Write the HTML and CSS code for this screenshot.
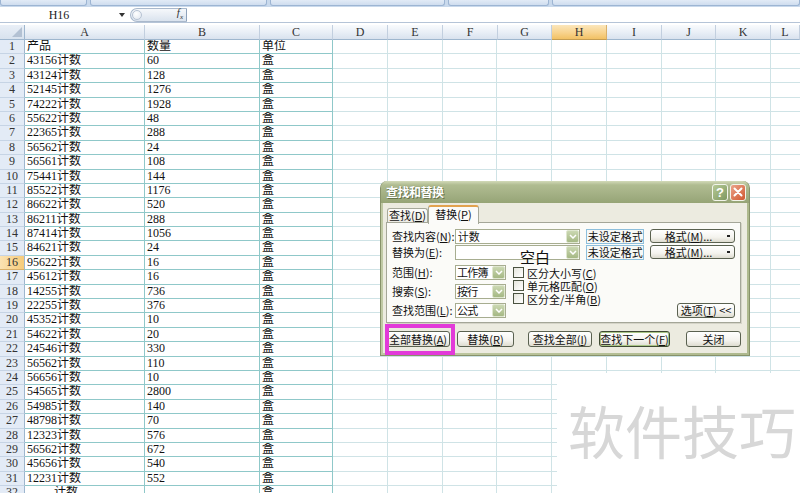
FILE: index.html
```html
<!DOCTYPE html>
<html lang="zh">
<head>
<meta charset="utf-8">
<title>查找和替换</title>
<link rel="stylesheet" href="styles.css">
</head>
<body>
<div class="app">
  <div class="ribbon">
    <div class="seg s1"></div><div class="seg s2"></div><div class="seg s3"></div><div class="seg s4"></div><div class="seg s5"></div>
  </div>
  <div class="fbar">
    <div class="namebox">H16</div>
    <div class="nb-arrow"></div>
    <div class="fx"><span class="knob"></span><span class="fxt"><i>f</i><sub>x</sub></span></div>
    <div class="formula"></div>
  </div>
  <div class="sheet">
    <div class="corner"></div>
    <div class="ch">A</div><div class="ch">B</div><div class="ch">C</div>
    <div class="chs">
      <div class="ch w55">D</div><div class="ch w55">E</div><div class="ch w55">F</div><div class="ch w54">G</div><div class="ch w55 sel">H</div><div class="ch w55">I</div><div class="ch w54">J</div><div class="ch w55">K</div><div class="ch wl">L</div>
    </div>

    <div class="rh">1</div><div class="c">产品</div><div class="c">数量</div><div class="c">单位</div><div class="x"></div>
    <div class="rh">2</div><div class="c">43156计数</div><div class="c">60</div><div class="c">盒</div><div class="x"></div>
    <div class="rh">3</div><div class="c">43124计数</div><div class="c">128</div><div class="c">盒</div><div class="x"></div>
    <div class="rh">4</div><div class="c">52145计数</div><div class="c">1276</div><div class="c">盒</div><div class="x"></div>
    <div class="rh">5</div><div class="c">74222计数</div><div class="c">1928</div><div class="c">盒</div><div class="x"></div>
    <div class="rh">6</div><div class="c">55622计数</div><div class="c">48</div><div class="c">盒</div><div class="x"></div>
    <div class="rh">7</div><div class="c">22365计数</div><div class="c">288</div><div class="c">盒</div><div class="x"></div>
    <div class="rh">8</div><div class="c">56562计数</div><div class="c">24</div><div class="c">盒</div><div class="x"></div>
    <div class="rh">9</div><div class="c">56561计数</div><div class="c">108</div><div class="c">盒</div><div class="x"></div>
    <div class="rh">10</div><div class="c">75441计数</div><div class="c">144</div><div class="c">盒</div><div class="x"></div>
    <div class="rh">11</div><div class="c">85522计数</div><div class="c">1176</div><div class="c">盒</div><div class="x"></div>
    <div class="rh">12</div><div class="c">86622计数</div><div class="c">520</div><div class="c">盒</div><div class="x"></div>
    <div class="rh">13</div><div class="c">86211计数</div><div class="c">288</div><div class="c">盒</div><div class="x"></div>
    <div class="rh">14</div><div class="c">87414计数</div><div class="c">1056</div><div class="c">盒</div><div class="x"></div>
    <div class="rh">15</div><div class="c">84621计数</div><div class="c">24</div><div class="c">盒</div><div class="x"></div>
    <div class="rh sel">16</div><div class="c">95622计数</div><div class="c">16</div><div class="c">盒</div><div class="x"></div>
    <div class="rh">17</div><div class="c">45612计数</div><div class="c">16</div><div class="c">盒</div><div class="x"></div>
    <div class="rh">18</div><div class="c">14255计数</div><div class="c">736</div><div class="c">盒</div><div class="x"></div>
    <div class="rh">19</div><div class="c">22255计数</div><div class="c">376</div><div class="c">盒</div><div class="x"></div>
    <div class="rh">20</div><div class="c">45352计数</div><div class="c">10</div><div class="c">盒</div><div class="x"></div>
    <div class="rh">21</div><div class="c">54622计数</div><div class="c">20</div><div class="c">盒</div><div class="x"></div>
    <div class="rh">22</div><div class="c">24546计数</div><div class="c">330</div><div class="c">盒</div><div class="x"></div>
    <div class="rh">23</div><div class="c">56562计数</div><div class="c">110</div><div class="c">盒</div><div class="x"></div>
    <div class="rh">24</div><div class="c">56656计数</div><div class="c">10</div><div class="c">盒</div><div class="x"></div>
    <div class="rh">25</div><div class="c">54565计数</div><div class="c">2800</div><div class="c">盒</div><div class="x"></div>
    <div class="rh">26</div><div class="c">54985计数</div><div class="c">140</div><div class="c">盒</div><div class="x"></div>
    <div class="rh">27</div><div class="c">48798计数</div><div class="c">70</div><div class="c">盒</div><div class="x"></div>
    <div class="rh">28</div><div class="c">12323计数</div><div class="c">576</div><div class="c">盒</div><div class="x"></div>
    <div class="rh">29</div><div class="c">56562计数</div><div class="c">672</div><div class="c">盒</div><div class="x"></div>
    <div class="rh">30</div><div class="c">45656计数</div><div class="c">540</div><div class="c">盒</div><div class="x"></div>
    <div class="rh">31</div><div class="c">12231计数</div><div class="c">552</div><div class="c">盒</div><div class="x"></div>
    <div class="rh">32</div><div class="c">　　 计数</div><div class="c"></div><div class="c">盒</div><div class="x"></div>
  </div>

  <div class="dialog">
    <div class="titlebar">
      <span class="title">查找和替换</span>
      <span class="tbtn help">?</span>
      <span class="tbtn close"><svg width="10" height="10" viewBox="0 0 10 10"><path d="M1.5 1.5 L8.5 8.5 M8.5 1.5 L1.5 8.5" stroke="#fff" stroke-width="2" stroke-linecap="round"/></svg></span>
    </div>
    <div class="dbody">
      <div class="tabs">
        <div class="tab">查找(<u>D</u>)</div>
        <div class="tab active">替换(<u>P</u>)</div>
      </div>
      <div class="panel">
        <div class="frow">
          <span class="lbl">查找内容(<u>N</u>):</span>
          <div class="combo wide"><span class="val">计数</span><span class="dd"><svg width="8" height="5" viewBox="0 0 8 5"><path d="M1 1 L4 4 L7 1" fill="none" stroke="#fff" stroke-width="1.5"/></svg></span></div>
          <div class="fmtbox">未设定格式</div>
          <div class="btn fmtbtn">格式(<u>M</u>)...<span class="dot"></span></div>
        </div>
        <div class="frow">
          <span class="lbl">替换为(<u>E</u>):</span>
          <div class="combo wide"><span class="val"></span><span class="dd"><svg width="8" height="5" viewBox="0 0 8 5"><path d="M1 1 L4 4 L7 1" fill="none" stroke="#fff" stroke-width="1.5"/></svg></span></div>
          <div class="fmtbox">未设定格式</div>
          <div class="btn fmtbtn">格式(<u>M</u>)...<span class="dot"></span></div>
        </div>
        <div class="lower">
          <div class="lcol">
            <div class="srow"><span class="lbl">范围(<u>H</u>):</span><div class="combo narrow"><span class="val">工作簿</span><span class="dd"><svg width="8" height="5" viewBox="0 0 8 5"><path d="M1 1 L4 4 L7 1" fill="none" stroke="#fff" stroke-width="1.5"/></svg></span></div></div>
            <div class="srow"><span class="lbl">搜索(<u>S</u>):</span><div class="combo narrow"><span class="val">按行</span><span class="dd"><svg width="8" height="5" viewBox="0 0 8 5"><path d="M1 1 L4 4 L7 1" fill="none" stroke="#fff" stroke-width="1.5"/></svg></span></div></div>
            <div class="srow"><span class="lbl">查找范围(<u>L</u>):</span><div class="combo narrow"><span class="val">公式</span><span class="dd"><svg width="8" height="5" viewBox="0 0 8 5"><path d="M1 1 L4 4 L7 1" fill="none" stroke="#fff" stroke-width="1.5"/></svg></span></div></div>
          </div>
          <div class="checks">
            <div class="chk"><span class="box"></span><span class="ct">区分大小写(<u>C</u>)</span></div>
            <div class="chk"><span class="box"></span><span class="ct">单元格匹配(<u>O</u>)</span></div>
            <div class="chk"><span class="box"></span><span class="ct">区分全/半角(<u>B</u>)</span></div>
          </div>
          <div class="btn opt">选项(<u>T</u>) &lt;&lt;</div>
        </div>
      </div>
      <div class="actions">
        <div class="btn a1">全部替换(<u>A</u>)</div>
        <div class="btn a2">替换(<u>R</u>)</div>
        <div class="btn a3">查找全部(<u>I</u>)</div>
        <div class="btn a4 def">查找下一个(<u>F</u>)</div>
        <div class="btn a5">关闭</div>
      </div>
    </div>
    <div class="hl"></div>
  </div>

  <div class="note">空白</div>
  <div class="wm">软件技巧</div>
</div>
</body>
</html>
```

FILE: styles.css
```css
* { box-sizing: border-box; }
html, body { margin: 0; padding: 0; }
body { width: 800px; height: 493px; overflow: hidden; background: #fff; }

.app {
  position: relative;
  width: 800px;
  height: 493px;
  overflow: hidden;
  font-family: "Liberation Serif", "Noto Sans CJK SC", serif;
  font-size: 12px;
  color: #111;
  background: #fff;
}

/* ribbon remnants */
.ribbon { display: flex; gap: 3px; height: 7px; background: #c9d9ec; }
.seg {
  height: 6px;
  background: linear-gradient(#e2ebf6, #cfddef);
  border: 1px solid #9db5d3;
  border-top: none;
  border-radius: 0 0 3px 3px;
}
.s1 { width: 87px; }
.s2 { width: 177px; }
.s3 { width: 175px; }
.s4 { width: 101px; }
.s5 { flex: 1; }

/* formula bar */
.fbar {
  display: flex;
  align-items: center;
  height: 16px;
  background: #fff;
  border-bottom: 1px solid #b5c4d7;
}
.namebox { width: 118px; text-align: center; line-height: 14px; color: #222; }
.nb-arrow {
  width: 0; height: 0;
  border-left: 3px solid transparent;
  border-right: 3px solid transparent;
  border-top: 4px solid #333;
  margin-left: 1px;
}
.fx {
  display: flex;
  align-items: center;
  margin-left: 5px;
  width: 57px;
  height: 14px;
  border: 1px solid #aab9cc;
  border-right-color: #8ea2bb;
  border-radius: 7px 0 0 7px;
  background: linear-gradient(#f6f8fb, #dae3ee);
}
.knob {
  width: 10px; height: 10px;
  margin-left: 1px;
  border-radius: 50%;
  border: 1px solid #b7c3d3;
  background: radial-gradient(circle at 40% 35%, #fff, #dfe6ef);
}
.fxt { margin-left: auto; margin-right: 3px; font-size: 11px; line-height: 12px; color: #333; }
.fxt sub { font-size: 7px; font-style: italic; }
.formula { flex: 1; }

/* sheet */
.sheet {
  display: grid;
  grid-template-columns: 25px 120px 115px 73px 1fr;
  grid-template-rows: 15px;
  grid-auto-rows: 14.4px;
  margin-top: 2px;
  background: repeating-linear-gradient(90deg, transparent 0 53.75px, #cfe3e6 53.75px 54.75px) 333px 0 / 467px 100% no-repeat;
}
.corner {
  position: relative;
  background: linear-gradient(#e9eff7, #d8e2ee);
  border-right: 1px solid #9eb6ce;
  border-bottom: 1px solid #9eb6ce;
}
.corner::after {
  content: "";
  position: absolute;
  right: 2px; bottom: 2px;
  width: 0; height: 0;
  border-left: 10px solid transparent;
  border-bottom: 10px solid #b3c1d3;
}
.ch {
  background: linear-gradient(#f9fbfd, #e8eef6 55%, #d9e2ee);
  border-right: 1px solid #c2cfdf;
  border-bottom: 1px solid #9eb6ce;
  text-align: center;
  line-height: 14px;
  color: #333;
}
.chs { display: flex; }
.w55 { width: 55px; }
.w54 { width: 54px; }
.wl { flex: 1; }
.ch.sel {
  background: linear-gradient(#fbe6bb, #f8d38e 55%, #f2c164);
  border-bottom-color: #c59d52;
  border-right-color: #d9b06a;
}
.rh {
  background: #e3ebf6;
  border-right: 1px solid #9eb6ce;
  border-bottom: 1px solid #c6d4e5;
  text-align: center;
  line-height: 13px;
  color: #333;
}
.rh.sel { background: linear-gradient(90deg, #fbe3b3, #f6cb7a); border-bottom-color: #d9b06a; }
.c {
  border-right: 1px solid #8fc8c9;
  border-bottom: 1px solid #8fc8c9;
  padding-left: 2px;
  line-height: 13px;
  white-space: nowrap;
  overflow: hidden;
}
.x { border-bottom: 1px solid #cfe3e6; }

/* dialog */
.dialog {
  position: absolute;
  left: 380px;
  top: 181px;
  width: 370px;
  height: 175px;
  padding: 0 2px 2px;
  border: 1px solid #87926a;
  border-top: none;
  border-radius: 7px 7px 0 0;
  background: linear-gradient(90deg, #c0c9a4, #b6c097 50%, #aeb98e);
  font-family: "Noto Sans CJK SC", sans-serif;
  font-size: 11px;
  color: #111;
}
.titlebar {
  display: flex;
  align-items: center;
  height: 22px;
  margin: 0 -2px;
  padding: 0 3px 0 5px;
  border-radius: 7px 7px 0 0;
  background: linear-gradient(#d2dab8, #b0bc91 18%, #a3b084 60%, #96a476);
}
.title {
  color: #fff;
  font-size: 12px;
  font-weight: bold;
  letter-spacing: -0.5px;
  line-height: 14px;
  text-shadow: 1px 1px 0 #67734a, 0 0 1px #6f7b53;
}
.tbtn {
  display: flex;
  align-items: center;
  justify-content: center;
  width: 16px;
  height: 17px;
  border: 1px solid #f2f4ea;
  border-radius: 3px;
  color: #fff;
  font-family: "Liberation Sans", sans-serif;
  font-weight: bold;
  font-size: 13px;
}
.help { margin-left: auto; background: linear-gradient(135deg, #b6c996, #7f9860); }
.close { margin-left: 2px; background: linear-gradient(135deg, #eba38a, #d1582f); }

.dbody { height: 150px; padding: 2px 6px 0 3px; background: #ecebe0; }
.tabs { display: flex; align-items: flex-end; height: 17px; padding-left: 1px; }
.tab {
  width: 41px;
  height: 14px;
  border: 1px solid #a6a99a;
  border-bottom: none;
  border-radius: 3px 3px 0 0;
  background: linear-gradient(#fdfdfb, #ecebe4);
  text-align: center;
  line-height: 13px;
  white-space: nowrap;
}
.tab.active {
  position: relative;
  z-index: 1;
  width: 51px;
  height: 19px;
  margin-bottom: -2px;
  border-top: 2px solid #e2a24e;
  background: #fbfbf9;
  line-height: 15px;
}
.panel {
  height: 101px;
  padding: 6px 5px 4px 5px;
  border: 1px solid #a4a698;
  background: #fbfbf8;
  box-shadow: 1px 1px 0 #d5d4c8;
}
.frow { display: flex; align-items: center; height: 14px; margin-bottom: 2px; }
.lbl { width: 63px; white-space: nowrap; line-height: 13px; }
.combo {
  display: flex;
  align-items: center;
  height: 15px;
  border: 1px solid #a7ad90;
  background: #fff;
}
.wide { width: 126px; }
.narrow { width: 51px; }
.val { flex: 1; padding-left: 2px; line-height: 13px; white-space: nowrap; overflow: hidden; }
.narrow .val { padding-left: 1px; letter-spacing: -0.7px; }
.dd {
  display: flex;
  align-items: center;
  justify-content: center;
  flex: none;
  width: 13px;
  height: 13px;
  border-radius: 2px;
  background: linear-gradient(#cbd8b2, #a5b884);
  border: 1px solid #dfe7cf;
}
.fmtbox {
  width: 58px;
  height: 15px;
  margin-left: 6px;
  border: 1px solid #8dbfdc;
  background: #f6f8f6;
  text-align: center;
  line-height: 13px;
  white-space: nowrap;
}
.btn {
  position: relative;
  height: 16px;
  border: 1px solid #5a6150;
  border-radius: 3px;
  background: linear-gradient(#ffffff, #f4f3ee 60%, #dedcd0);
  text-align: center;
  line-height: 14px;
  white-space: nowrap;
}
.fmtbtn { width: 85px; height: 14px; margin-left: 6px; line-height: 12px; padding-right: 8px; }
.dot {
  position: absolute;
  right: 4px;
  top: 5px;
  width: 3px;
  height: 2px;
  background: #222;
}
.lower { display: flex; margin-top: 6px; }
.lcol { display: flex; flex-direction: column; gap: 4px; }
.srow { display: flex; align-items: center; height: 15px; }
.checks { display: flex; flex-direction: column; margin-left: 7px; margin-top: 1px; }
.chk {
  display: flex;
  align-items: center;
  height: 13px;
  white-space: nowrap;
}
.ct { line-height: 12px; height: 12px; }
.box {
  flex: none;
  width: 11px;
  height: 11px;
  margin-right: 3px;
  border: 1px solid #4a5240;
  background: linear-gradient(135deg, #e6e6dd, #fff);
}
.opt { align-self: flex-end; margin-left: auto; width: 58px; height: 15px; line-height: 13px; }

.actions { display: flex; margin-top: 8px; }
.a1 { width: 64px; }
.a2 { width: 57px; margin-left: 7px; }
.a3 { width: 64px; margin-left: 14px; }
.a4 { width: 71px; margin-left: 7px; }
.a5 { width: 55px; margin-left: 16px; }
.def { border-color: #3f4a33; box-shadow: inset 0 0 0 1px #a9c585; }

.hl {
  position: absolute;
  left: 4px;
  top: 143px;
  width: 70px;
  height: 31px;
  border: 4px solid #e23ad9;
}

.note {
  position: absolute;
  left: 520px;
  top: 249px;
  font-family: "Noto Sans CJK SC", sans-serif;
  font-size: 15px;
  line-height: 16px;
  color: #111;
}

.wm {
  position: absolute;
  left: 557px;
  top: 373px;
  width: 243px;
  height: 120px;
  padding: 28px 0 0 11px;
  background: #fff;
  font-family: "Noto Sans CJK SC", sans-serif;
  font-size: 57px;
  line-height: 57px;
  color: #d7d7d7;
  white-space: nowrap;
}
```
